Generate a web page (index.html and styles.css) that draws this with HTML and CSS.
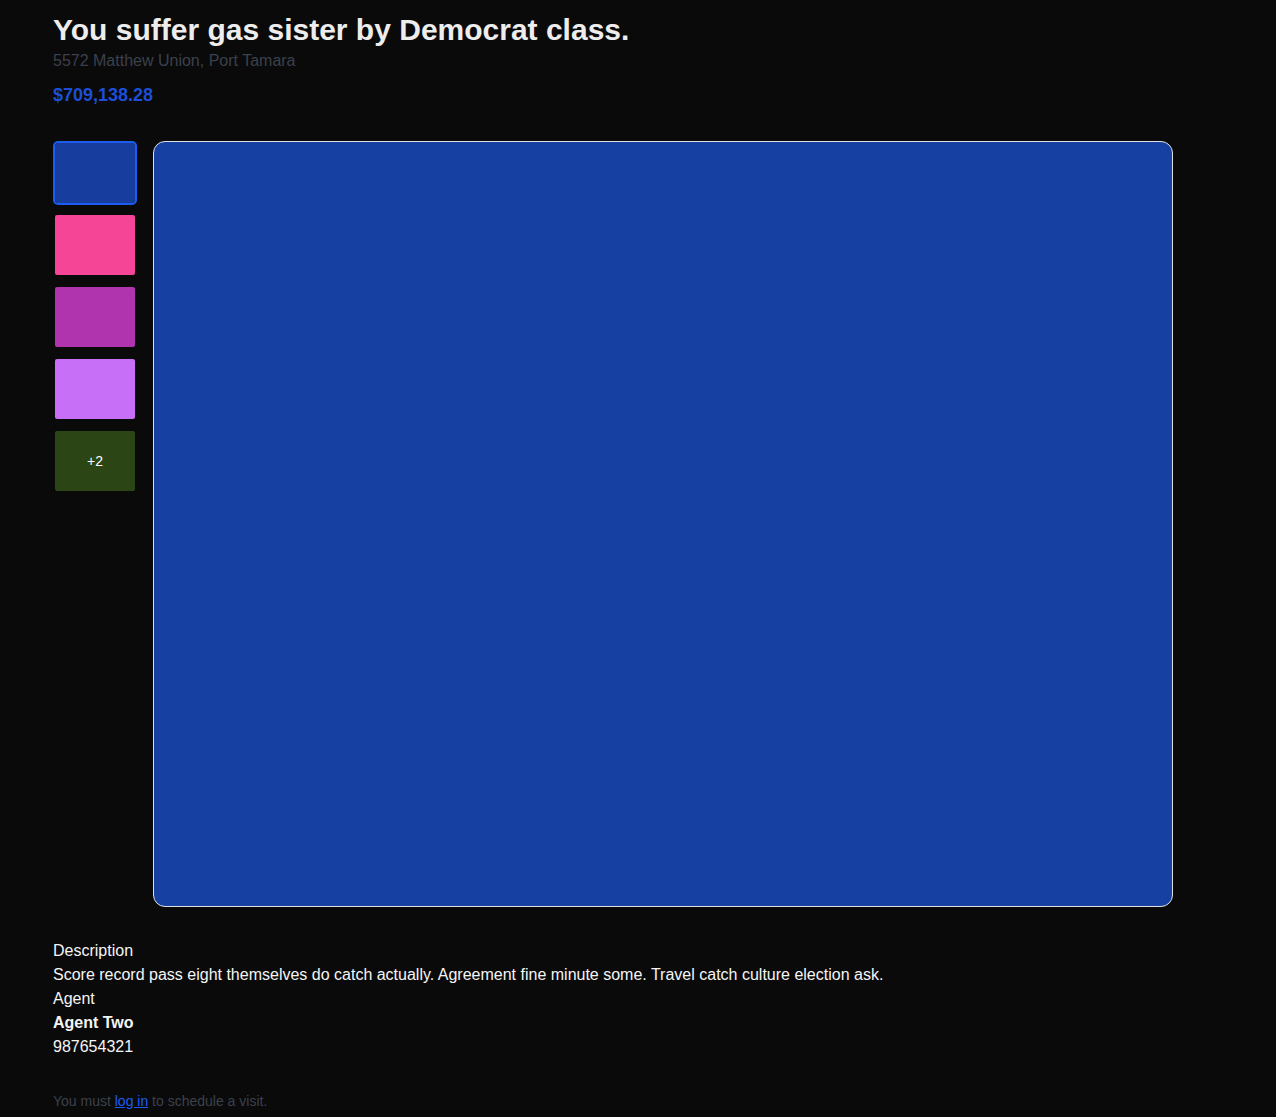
FILE: index.html
```html
<!DOCTYPE html>
<html>
<head>
<meta charset="utf-8">
<link rel="stylesheet" href="styles.css">
</head>
<body>
<main class="page">
  <header class="head">
    <h1 class="title">You suffer gas sister by Democrat class.</h1>
    <p class="address">5572 Matthew Union, Port Tamara</p>
    <p class="price">$709,138.28</p>
  </header>
  <section class="gallery">
    <div class="thumbs">
      <div class="thumb active t1"></div>
      <div class="thumb t2"></div>
      <div class="thumb t3"></div>
      <div class="thumb t4"></div>
      <div class="thumb t5">+2</div>
    </div>
    <div class="hero"></div>
  </section>
  <section class="details">
    <div>Description</div>
    <div>Score record pass eight themselves do catch actually. Agreement fine minute some. Travel catch culture election ask.</div>
    <div>Agent</div>
    <div class="agent">Agent Two</div>
    <div>987654321</div>
  </section>
  <p class="login">You must <a href="#">log in</a> to schedule a visit.</p>
</main>
</body>
</html>
```
FILE: styles.css
```css
html, body {
  margin: 0;
  padding: 0;
  background: #0a0a0a;
}
body {
  font-family: "Liberation Sans", Arial, sans-serif;
  color: #f2f2f2;
}
.page {
  padding: 12px 0 0 53px;
}
.head {
  display: flex;
  flex-direction: column;
}
.title {
  margin: 0;
  font-size: 30px;
  line-height: 36px;
  font-weight: bold;
  color: #ededed;
}
.address {
  margin: 1px 0 0;
  font-size: 16px;
  line-height: 24px;
  color: #3b414d;
}
.price {
  margin: 10px 0 0;
  font-size: 18px;
  line-height: 24px;
  font-weight: bold;
  color: #1d4ed8;
}
.gallery {
  display: flex;
  gap: 16px;
  margin-top: 34px;
  width: 1120px;
}
.thumbs {
  display: flex;
  flex-direction: column;
  gap: 12px;
  padding: 2px;
}
.thumb {
  width: 80px;
  height: 60px;
  border-radius: 2px;
  display: flex;
  align-items: center;
  justify-content: center;
  font-size: 14px;
  color: #ffffff;
}
.thumb.active {
  outline: 2px solid #1d5cf0;
  border-radius: 3px;
}
.t1 { background: #173e9e; }
.t2 { background: #f44597; }
.t3 { background: #b034ae; }
.t4 { background: #c76ff7; }
.t5 { background: #2b4614; }
.hero {
  width: 1018px;
  height: 764px;
  background: #1740a3;
  border: 1px solid #e0e0e0;
  border-radius: 12px;
}
.details {
  margin-top: 32px;
  font-size: 16px;
  line-height: 24px;
  color: #f5f5f5;
}
.agent {
  font-weight: bold;
}
.login {
  margin: 32px 0 0;
  font-size: 14px;
  line-height: 20px;
  color: #3b414d;
}
.login a {
  color: #1d5cf0;
}
```
